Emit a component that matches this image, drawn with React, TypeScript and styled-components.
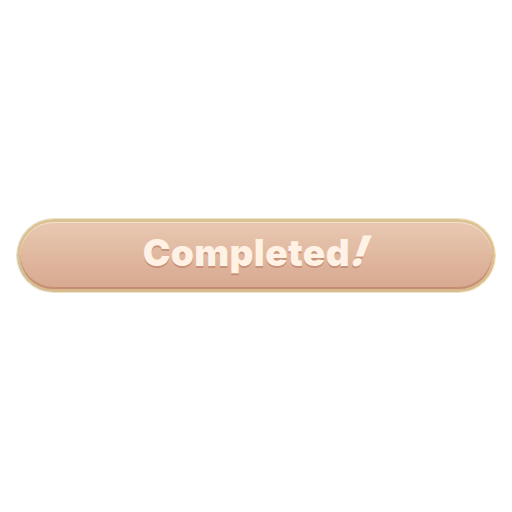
import React from 'react'
import styled, { createGlobalStyle } from 'styled-components'

const GlobalStyle = createGlobalStyle`
  html, body {
    margin: 0;
    padding: 0;
    background: #ffffff;
  }
  #root {
    width: 512px;
    height: 512px;
  }
`

const Page = styled.div`
  width: 512px;
  height: 512px;
  display: flex;
  align-items: center;
  justify-content: center;
  padding-bottom: 2px;
  box-sizing: border-box;
`

const Pill = styled.div`
  width: 478px;
  height: 73px;
  box-sizing: border-box;
  border-radius: 37px;
  padding: 3px;
  background: linear-gradient(180deg, #dcc394 0%, #d7bb8c 100%);
  box-shadow: 0 0 0 1px rgba(226, 206, 168, 0.6);
`

const Face = styled.div`
  height: 100%;
  box-sizing: border-box;
  padding-bottom: 9px;
  border-radius: 34px;
  display: flex;
  align-items: center;
  justify-content: center;
  background: linear-gradient(180deg, #e9c9b2 0%, #e0b8a0 50%, #d8a890 100%);
  box-shadow: inset 0 1px 0 #f3e0cc, inset 0 -2px 0 #c48c70;
`

const Label = styled.span`
  font-family: Inter, 'Noto Sans', sans-serif;
  font-weight: 900;
  font-size: 37px;
  letter-spacing: 0.4px;
  color: #fff1e3;
  text-shadow: 0 2px 0 rgba(178, 118, 92, 0.55);
`

const Bang = styled.span`
  display: inline-block;
  font-style: italic;
  font-size: 42px;
  margin-left: 3px;
  transform: skewX(-12deg);
`

export default function App() {
  return (
    <>
      <GlobalStyle />
      <Page>
        <Pill>
          <Face>
            <Label>
              Completed<Bang>!</Bang>
            </Label>
          </Face>
        </Pill>
      </Page>
    </>
  )
}
